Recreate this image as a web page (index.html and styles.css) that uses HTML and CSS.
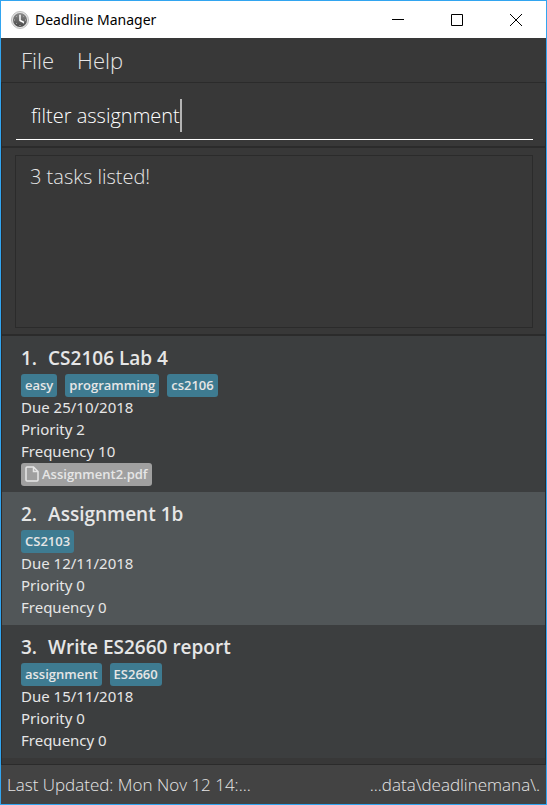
FILE: index.html
```html
<!DOCTYPE html>
<html lang="en">
<head>
<meta charset="utf-8">
<meta name="viewport" content="width=device-width, initial-scale=1">
<title>Deadline Manager</title>
<link rel="stylesheet" href="styles.css">
</head>
<body>
<div class="window">
  <header class="titlebar">
    <svg class="app-icon" viewBox="0 0 18 18" aria-hidden="true">
      <defs><linearGradient id="dial" x1="0" y1="0" x2="0" y2="1"><stop offset="0" stop-color="#8a8a8a"/><stop offset="1" stop-color="#484848"/></linearGradient></defs>
      <circle cx="9" cy="9" r="8.5" fill="#e4e4e4" stroke="#bdbdbd"/>
      <circle cx="9" cy="9" r="7" fill="url(#dial)"/>
      <path d="M9 3v1M9 14v1M3 9h1M14 9h1M5 5l.6.6M12.500 12.500l.6.6M5 13l.6-.6M12.500 5.500l.6-.6" stroke="#c4c4c4" fill="none"/>
      <path d="M9 4v5.500l4 2" stroke="#fff" stroke-width="1.500" fill="none"/>
    </svg>
    <h1 class="window-title">Deadline Manager</h1>
    <div class="window-controls">
      <button class="control" aria-label="Minimize"><svg viewBox="0 0 12 12"><path d="M0 5.500h12"/></svg></button>
      <button class="control" aria-label="Maximize"><svg viewBox="0 0 12 12"><path d="M.5.5h11v11H.5z"/></svg></button>
      <button class="control" aria-label="Close"><svg viewBox="0 0 12 12"><path d="M0 0l12 12M12 0L0 12"/></svg></button>
    </div>
  </header>
  <nav class="menubar">
    <button class="menu">File</button>
    <button class="menu">Help</button>
  </nav>
  <section class="pane command-pane">
    <div class="command-line">
      <input class="command" type="text" aria-label="Command" value="filter assignment" spellcheck="false">
      <span class="caret"></span>
    </div>
  </section>
  <section class="pane result-pane">
    <div class="result" role="status">3 tasks listed!</div>
  </section>
  <main class="pane list-pane">
    <ul class="tasks">
      <li class="task">
        <h2 class="task-title"><span class="index">1.</span>CS2106 Lab 4</h2>
        <div class="tags"><span class="tag">easy</span><span class="tag">programming</span><span class="tag">cs2106</span></div>
        <p class="detail">Due 25/10/2018</p>
        <p class="detail">Priority 2</p>
        <p class="detail">Frequency 10</p>
        <div class="tags"><span class="tag attachment"><svg class="file-icon" viewBox="0 0 14 16" aria-hidden="true"><path d="M1 2q0-1 1-1h6.500l4.500 4.500V14q0 1-1 1H2q-1 0-1-1zM8.500 1v4.500H13"/></svg>Assignment2.pdf</span></div>
      </li>
      <li class="task selected">
        <h2 class="task-title"><span class="index">2.</span>Assignment 1b</h2>
        <div class="tags"><span class="tag">CS2103</span></div>
        <p class="detail">Due 12/11/2018</p>
        <p class="detail">Priority 0</p>
        <p class="detail">Frequency 0</p>
      </li>
      <li class="task">
        <h2 class="task-title"><span class="index">3.</span>Write ES2660 report</h2>
        <div class="tags"><span class="tag">assignment</span><span class="tag">ES2660</span></div>
        <p class="detail">Due 15/11/2018</p>
        <p class="detail">Priority 0</p>
        <p class="detail">Frequency 0</p>
      </li>
    </ul>
  </main>
  <footer class="statusbar">
    <span>Last Updated: Mon Nov 12 14:...</span>
    <span>...data\deadlinemana\.</span>
  </footer>
</div>
</body>
</html>
```
FILE: styles.css
```css
* {
  box-sizing: border-box;
}

body {
  margin: 0;
  font-family: "Open Sans", "Noto Sans", sans-serif;
  color: #e6e6e6;
}

button,
input {
  padding: 0;
  border: 0;
  background: none;
  font: inherit;
  color: inherit;
}

.window {
  display: flex;
  flex-direction: column;
  min-height: 100vh;
  border: 1px solid #32a5f0;
  background: #383838;
}

.titlebar {
  display: flex;
  align-items: center;
  height: 37px;
  padding: 0 1px 0 10px;
  background: #fff;
  color: #000;
}

.app-icon {
  width: 18px;
  height: 18px;
  margin-right: 6px;
}

.window-title {
  flex: 1;
  margin: 0;
  font-family: "Noto Sans", sans-serif;
  font-size: 14px;
  font-weight: 400;
}

.window-controls {
  display: flex;
  height: 100%;
}

.control {
  display: grid;
  place-items: center;
  width: 59px;
}

.control svg {
  width: 12px;
  height: 12px;
  fill: none;
  stroke: #000;
}

.menubar {
  display: flex;
  gap: 23px;
  height: 44px;
  padding: 0 20px 1px;
}

.menu {
  font-size: 22px;
  font-weight: 300;
}

.command,
.result {
  font-size: 20px;
  font-weight: 300;
}

.pane {
  border: 1px solid #2b2b2b;
}

.command-pane {
  padding: 8px 12px 6px 14px;
}

.command-line {
  display: flex;
  align-items: center;
  height: 49px;
  padding-left: 15px;
  border-bottom: 1px solid #fff;
}

.command {
  field-sizing: content;
  color: #fff;
  outline: 0;
}

.caret {
  width: 2px;
  height: 33px;
  background: #b4b4b4;
}

.result-pane {
  padding: 7px 12px 6px 13px;
}

.result {
  height: 173px;
  padding: 7px 14px;
  border: 1px solid #2b2b2b;
  line-height: 28px;
}

.list-pane {
  flex: 1;
  padding-bottom: 6px;
}

.tasks {
  margin: 0;
  padding: 0;
  list-style: none;
}

.task {
  padding: 8px 19px 6px;
  background: #3c3e3f;
}

.selected {
  background: #515658;
}

.task-title {
  margin: 0 0 2px;
  font-size: 19px;
  font-weight: 600;
  line-height: 28px;
}

.index {
  margin-right: 11px;
}

.tags {
  display: flex;
  gap: 8px;
}

.tag {
  display: flex;
  align-items: center;
  gap: 3px;
  height: 23px;
  padding: 0 4px 1px;
  border-radius: 3px;
  background: #3e7b91;
  font-size: 13px;
  font-weight: 600;
}

.attachment {
  background: #a0a0a0;
}

.file-icon {
  width: 14px;
  height: 16px;
  fill: none;
  stroke: #e6e6e6;
  stroke-width: 1.500;
}

.detail {
  margin: 0;
  padding-bottom: 2px;
  font-family: "Noto Sans", sans-serif;
  font-size: 15px;
  line-height: 20px;
}

.statusbar {
  display: flex;
  justify-content: space-between;
  align-items: center;
  height: 39px;
  padding: 0 6px;
  background: #434343;
  font-size: 17px;
  font-weight: 300;
}
```
